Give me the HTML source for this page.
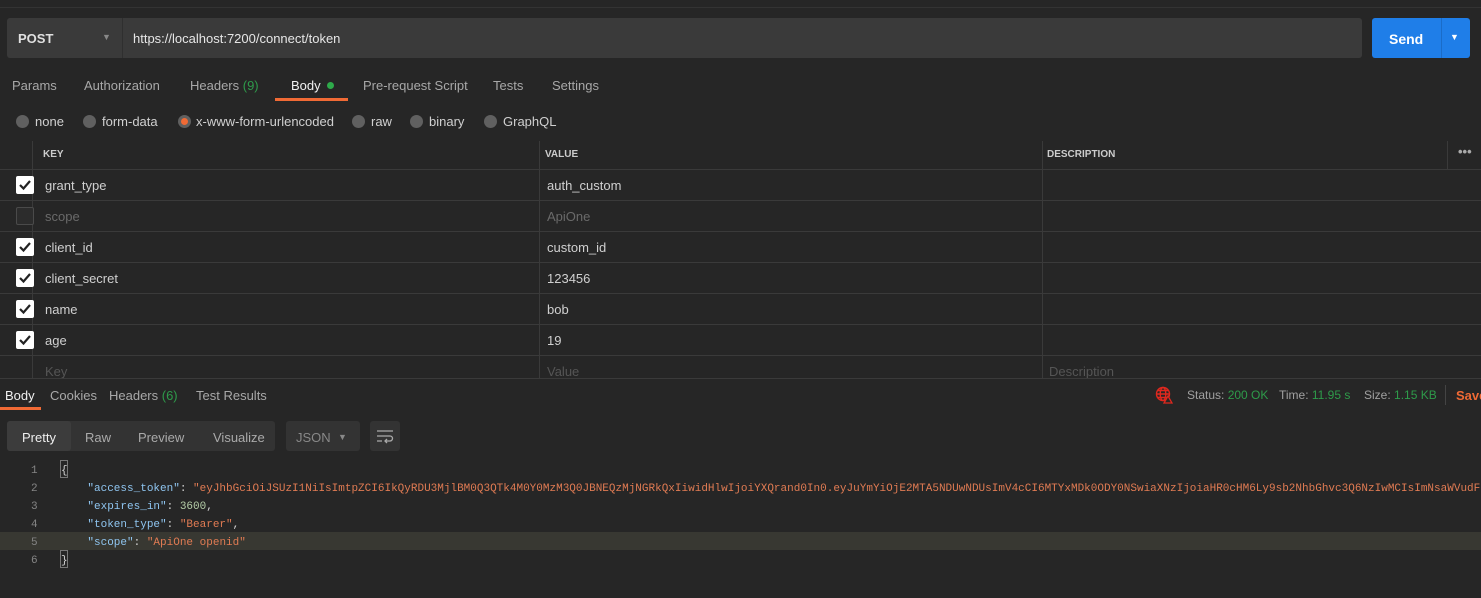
<!DOCTYPE html>
<html><head><style>
*{margin:0;padding:0;box-sizing:border-box}
body{width:1481px;height:598px;background:#262626;font-family:"Liberation Sans",sans-serif;color:#d0d0d0;font-size:13px;position:relative;overflow:hidden}
.a{position:absolute;white-space:nowrap}
.hl{position:absolute;left:0;right:0;height:1px;background:#3a3a3a}
.vl{position:absolute;width:1px;background:#3a3a3a}
.cb{position:absolute;left:16px;width:18px;height:18px;border-radius:2px;background:#fff}
.cb svg{position:absolute;left:2px;top:3px}
.cbo{position:absolute;left:16px;width:18px;height:18px;border-radius:2px;border:1px solid #4a4a4a;background:#2c2c2c}
.rad{position:absolute;width:13px;height:13px;border-radius:50%;background:#606060;top:115px}
.code{font-family:"Liberation Mono",monospace;font-size:11px}
.k{color:#8fc5f0}.s{color:#e07b53}.n{color:#b5cea8}
</style></head><body>
<div class="hl" style="top:7px;background:#333"></div>
<div class="a" style="left:7px;top:18px;width:1355px;height:40px;background:#3a3a3a;border-radius:3px"></div>
<div class="a" style="left:122px;top:18px;width:1px;height:40px;background:#2f2f2f"></div>
<div class="a" style="left:18px;top:31px;font-weight:bold;color:#e0e0e0">POST</div>
<div class="a" style="left:102px;top:32px;font-size:9px;color:#888">▼</div>
<div class="a" style="left:133px;top:31px;color:#e6e6e6">https://localhost:7200/connect/token</div>
<div class="a" style="left:1372px;top:18px;width:98px;height:40px;background:#1f7ee8;border-radius:3px"></div>
<div class="a" style="left:1441px;top:18px;width:1px;height:40px;background:#1a6cc8"></div>
<div class="a" style="left:1389px;top:31px;color:#fff;font-weight:bold;font-size:14px">Send</div>
<div class="a" style="left:1450px;top:32px;color:#fff;font-size:9px">▼</div>
<div class="a" style="left:12px;top:78px;color:#a8a8a8">Params</div>
<div class="a" style="left:84px;top:78px;color:#a8a8a8">Authorization</div>
<div class="a" style="left:190px;top:78px;color:#a8a8a8">Headers <span style="color:#2e9b4a">(9)</span></div>
<div class="a" style="left:291px;top:78px;color:#f0f0f0">Body <span style="display:inline-block;width:7px;height:7px;border-radius:50%;background:#2eaa4a;margin-left:3px;vertical-align:1px"></span></div>
<div class="a" style="left:275px;top:98px;width:73px;height:3px;background:#f06a35"></div>
<div class="a" style="left:363px;top:78px;color:#a8a8a8">Pre-request Script</div>
<div class="a" style="left:493px;top:78px;color:#a8a8a8">Tests</div>
<div class="a" style="left:552px;top:78px;color:#a8a8a8">Settings</div>
<div class="rad" style="left:16px"></div><div class="a" style="left:35px;top:114px">none</div>
<div class="rad" style="left:83px"></div><div class="a" style="left:102px;top:114px">form-data</div>
<div class="rad" style="left:178px"></div><div class="a" style="left:181px;top:118px;width:7px;height:7px;border-radius:50%;background:#f06a35"></div><div class="a" style="left:196px;top:114px">x-www-form-urlencoded</div>
<div class="rad" style="left:352px"></div><div class="a" style="left:371px;top:114px">raw</div>
<div class="rad" style="left:410px"></div><div class="a" style="left:429px;top:114px">binary</div>
<div class="rad" style="left:484px"></div><div class="a" style="left:503px;top:114px">GraphQL</div>
<div class="hl" style="top:169px"></div>
<div class="hl" style="top:200px"></div>
<div class="hl" style="top:231px"></div>
<div class="hl" style="top:262px"></div>
<div class="hl" style="top:293px"></div>
<div class="hl" style="top:324px"></div>
<div class="hl" style="top:355px"></div>
<div class="vl" style="left:32px;top:141px;height:237px"></div>
<div class="vl" style="left:539px;top:141px;height:237px"></div>
<div class="vl" style="left:1042px;top:141px;height:237px"></div>
<div class="vl" style="left:1447px;top:141px;height:28px"></div>
<div class="a" style="left:43px;top:149px;font-size:10px;font-weight:bold;color:#ccc">KEY</div>
<div class="a" style="left:545px;top:149px;font-size:10px;font-weight:bold;color:#ccc">VALUE</div>
<div class="a" style="left:1047px;top:149px;font-size:10px;font-weight:bold;color:#ccc">DESCRIPTION</div>
<div class="a" style="left:1458px;top:144px;color:#aaa;font-weight:bold">•••</div>
<div class="cb" style="top:176px"><svg width="14" height="12"><path d="M2 6l3.5 3.5L12 2" stroke="#222" stroke-width="2.2" fill="none"/></svg></div>
<div class="a" style="left:45px;top:178px">grant_type</div><div class="a" style="left:547px;top:178px">auth_custom</div>
<div class="cbo" style="top:207px"></div>
<div class="a" style="left:45px;top:209px;color:#6a6a6a">scope</div><div class="a" style="left:547px;top:209px;color:#6a6a6a">ApiOne</div>
<div class="cb" style="top:238px"><svg width="14" height="12"><path d="M2 6l3.5 3.5L12 2" stroke="#222" stroke-width="2.2" fill="none"/></svg></div>
<div class="a" style="left:45px;top:240px">client_id</div><div class="a" style="left:547px;top:240px">custom_id</div>
<div class="cb" style="top:269px"><svg width="14" height="12"><path d="M2 6l3.5 3.5L12 2" stroke="#222" stroke-width="2.2" fill="none"/></svg></div>
<div class="a" style="left:45px;top:271px">client_secret</div><div class="a" style="left:547px;top:271px">123456</div>
<div class="cb" style="top:300px"><svg width="14" height="12"><path d="M2 6l3.5 3.5L12 2" stroke="#222" stroke-width="2.2" fill="none"/></svg></div>
<div class="a" style="left:45px;top:302px">name</div><div class="a" style="left:547px;top:302px">bob</div>
<div class="cb" style="top:331px"><svg width="14" height="12"><path d="M2 6l3.5 3.5L12 2" stroke="#222" stroke-width="2.2" fill="none"/></svg></div>
<div class="a" style="left:45px;top:333px">age</div><div class="a" style="left:547px;top:333px">19</div>
<div class="a" style="left:45px;top:364px;color:#555">Key</div><div class="a" style="left:547px;top:364px;color:#555">Value</div><div class="a" style="left:1049px;top:364px;color:#555">Description</div>
<div class="hl" style="top:378px;background:#3a3a3a"></div>
<div class="a" style="left:0;top:379px;width:1481px;height:219px;background:#262626"></div>
<div class="a" style="left:5px;top:388px;color:#f0f0f0">Body</div>
<div class="a" style="left:0;top:407px;width:41px;height:3px;background:#f06a35"></div>
<div class="a" style="left:50px;top:388px;color:#a8a8a8">Cookies</div>
<div class="a" style="left:109px;top:388px;color:#a8a8a8">Headers <span style="color:#2e9b4a">(6)</span></div>
<div class="a" style="left:196px;top:388px;color:#a8a8a8">Test Results</div>
<svg class="a" style="left:1155px;top:386px" width="18" height="18" viewBox="0 0 18 18"><g stroke="#e0281e" stroke-width="1.4" fill="none"><circle cx="8" cy="8" r="6.5"/><ellipse cx="8" cy="8" rx="2.8" ry="6.5"/><path d="M1.5 8h13M2.5 4.5h11M2.5 11.5h11"/></g><path d="M13 10l4 7h-8z" fill="#262626" stroke="#e0281e" stroke-width="1.3"/></svg>
<div class="a" style="left:1187px;top:388px;font-size:12px;color:#a0a0a0">Status: <span style="color:#2e9b4a">200 OK</span></div>
<div class="a" style="left:1279px;top:388px;font-size:12px;color:#a0a0a0">Time: <span style="color:#2e9b4a">11.95 s</span></div>
<div class="a" style="left:1364px;top:388px;font-size:12px;color:#a0a0a0">Size: <span style="color:#2e9b4a">1.15 KB</span></div>
<div class="a" style="left:1445px;top:385px;width:1px;height:20px;background:#444"></div>
<div class="a" style="left:1456px;top:388px;width:25px;overflow:hidden;color:#f06a35;font-weight:bold">Save</div>
<div class="a" style="left:7px;top:421px;width:268px;height:30px;background:#333;border-radius:3px"></div>
<div class="a" style="left:7px;top:421px;width:64px;height:30px;background:#3c3c3c;border-radius:3px"></div>
<div class="a" style="left:22px;top:430px;color:#eee">Pretty</div>
<div class="a" style="left:85px;top:430px;color:#aaa">Raw</div>
<div class="a" style="left:138px;top:430px;color:#aaa">Preview</div>
<div class="a" style="left:213px;top:430px;color:#aaa">Visualize</div>
<div class="a" style="left:286px;top:421px;width:74px;height:30px;background:#333;border-radius:3px"></div>
<div class="a" style="left:296px;top:430px;color:#888">JSON</div>
<div class="a" style="left:338px;top:432px;font-size:9px;color:#888">▼</div>
<div class="a" style="left:370px;top:421px;width:30px;height:30px;background:#333;border-radius:3px"></div>
<svg class="a" style="left:376px;top:428px" width="18" height="16"><g stroke="#aaa" stroke-width="1.3" fill="none"><path d="M1 3h16M1 8h13a2.5 2.5 0 010 5h-4M1 13h5"/><path d="M11 11l-2 2 2 2"/></g></svg>
<div class="a" style="left:0;top:532px;width:1481px;height:18px;background:#383832"></div>
<div class="a" style="left:60px;top:460px;width:8px;height:18px;border:1px solid #777"></div>
<div class="a" style="left:60px;top:550px;width:8px;height:18px;border:1px solid #777"></div>
<div class="a code" style="left:31px;top:462px;line-height:18px;color:#858585">1<br>2<br>3<br>4<br>5<br>6</div>
<div class="a code" style="left:61px;top:462px;width:1420px;overflow:hidden;line-height:18px;color:#d4d4d4">{<br>&nbsp;&nbsp;&nbsp;&nbsp;<span class="k">"access_token"</span>: <span class="s">"eyJhbGciOiJSUzI1NiIsImtpZCI6IkQyRDU3MjlBM0Q3QTk4M0Y0MzM3Q0JBNEQzMjNGRkQxIiwidHlwIjoiYXQrand0In0.eyJuYmYiOjE2MTA5NDUwNDUsImV4cCI6MTYxMDk0ODY0NSwiaXNzIjoiaHR0cHM6Ly9sb2NhbGhvc3Q6NzIwMCIsImNsaWVudF9</span><br>&nbsp;&nbsp;&nbsp;&nbsp;<span class="k">"expires_in"</span>: <span class="n">3600</span>,<br>&nbsp;&nbsp;&nbsp;&nbsp;<span class="k">"token_type"</span>: <span class="s">"Bearer"</span>,<br>&nbsp;&nbsp;&nbsp;&nbsp;<span class="k">"scope"</span>: <span class="s">"ApiOne openid"</span><br>}</div>
</body></html>
